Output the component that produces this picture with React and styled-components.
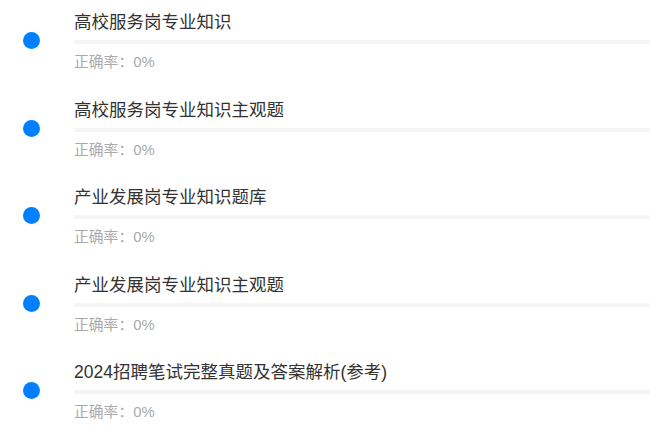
import styled, { createGlobalStyle } from "styled-components";

const GlobalStyle = createGlobalStyle`
  body {
    margin: 0;
    background: #fff;
    font-family: "Liberation Sans", "Noto Sans CJK SC", sans-serif;
  }
`;

const List = styled.ul`
  list-style: none;
  margin: 0;
  padding: 0;
`;

const Item = styled.li`
  display: flex;
  align-items: flex-start;
  height: 87.5px;
`;

const Dot = styled.span`
  flex: none;
  width: 17px;
  height: 17px;
  border-radius: 50%;
  background: #0080ff;
  margin: 32px 34px 0 23px;
`;

const Content = styled.div`
  flex: 1;
  padding-top: 10px;
`;

const Title = styled.div`
  font-size: 17.5px;
  line-height: 24px;
  color: #333;
`;

const Bar = styled.div`
  height: 4px;
  margin-top: 6px;
  background: #f5f5f5;
`;

const Rate = styled.div`
  margin-top: 8px;
  font-size: 14.8px;
  line-height: 20px;
  color: #aaa;
`;

const papers = [
  { name: "高校服务岗专业知识", rate: 0 },
  { name: "高校服务岗专业知识主观题", rate: 0 },
  { name: "产业发展岗专业知识题库", rate: 0 },
  { name: "产业发展岗专业知识主观题", rate: 0 },
  { name: "2024招聘笔试完整真题及答案解析(参考)", rate: 0 },
];

export default function App() {
  return (
    <>
      <GlobalStyle />
      <List>
        {papers.map((p) => (
          <Item key={p.name}>
            <Dot />
            <Content>
              <Title>{p.name}</Title>
              <Bar />
              <Rate>正确率：{p.rate}%</Rate>
            </Content>
          </Item>
        ))}
      </List>
    </>
  );
}
